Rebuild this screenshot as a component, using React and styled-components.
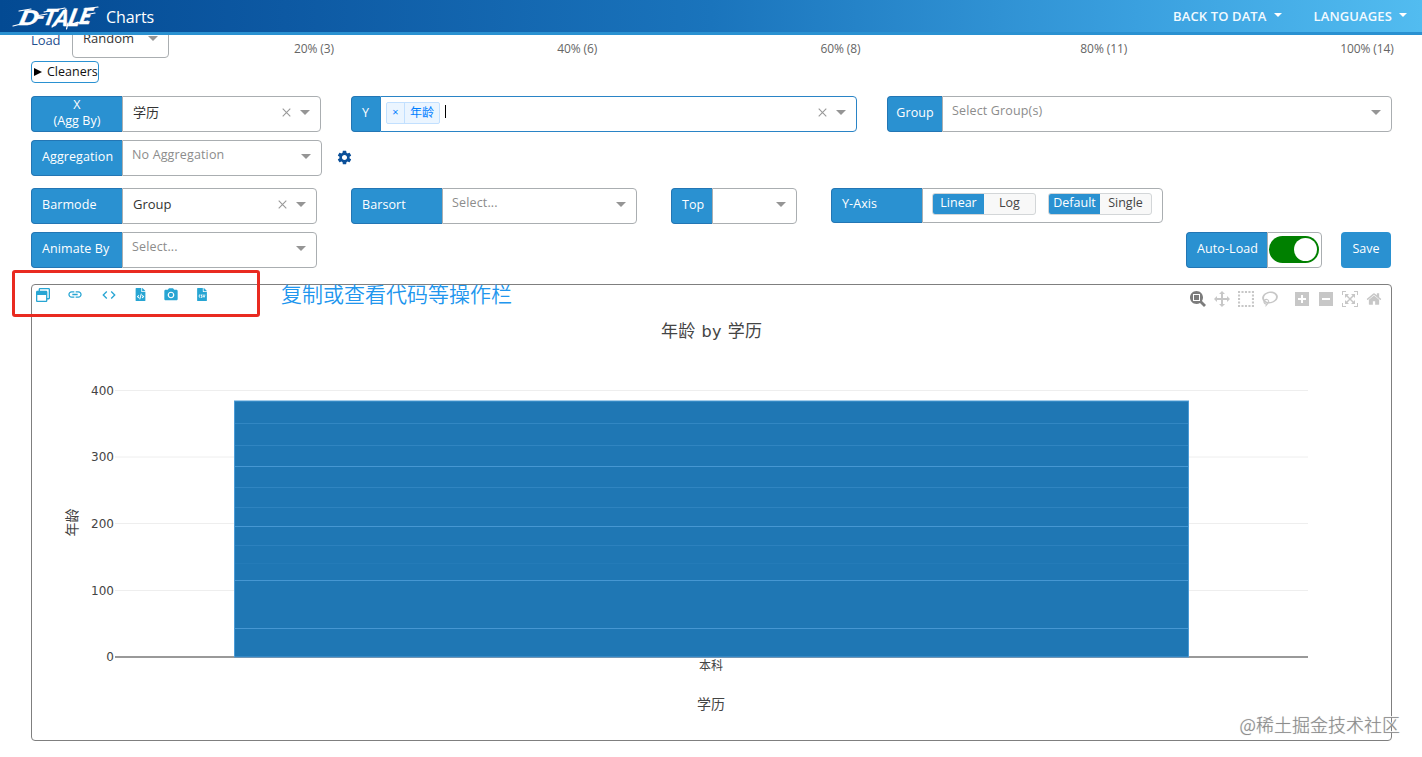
import React from "react"
import styled, { createGlobalStyle } from "styled-components"
import { FaRegWindowRestore, FaFileCode, FaFileCsv } from "react-icons/fa"
import { MdLink, MdCode, MdSettings, MdCameraAlt } from "react-icons/md"

const GlobalStyle = createGlobalStyle`
  * {
    box-sizing: border-box;
  }

  body {
    margin: 0;
    background: #fff;
    font-family: "Open Sans", "Noto Sans CJK SC", sans-serif;
    font-size: 13px;
    color: #333;
    overflow: hidden;
  }
`

const Page = styled.div`
  position: relative;
  width: 1422px;
  height: 757px;
  overflow: hidden;
  background: #fff;
`

const Header = styled.header`
  display: flex;
  align-items: center;
  height: 35px;
  padding: 0 15px 0 12px;
  background: linear-gradient(to right, #034a93 0%, #0d59a3 20%, #1a74bc 50%, #3aa0df 80%, #52bcf0 100%);
  border-bottom: 3px solid #2a91d1;
`

const Brand = styled.div`
  display: flex;
  align-items: center;
  gap: 7px;
  flex: 1;
  color: #fff;
`

const BrandTitle = styled.span`
  font-size: 16px;
  line-height: 20px;
  font-weight: 500;
  letter-spacing: -0.1px;
  padding-top: 1px;
`

const NavItem = styled.a`
  display: flex;
  align-items: center;
  gap: 7px;
  margin-left: 32px;
  color: #f2faff;
  font-size: 13px;
  font-weight: 600;
  letter-spacing: 0.12px;

  &::after {
    content: "";
    margin-bottom: 2px;
    border: 4px solid transparent;
    border-top-color: #fff;
    border-bottom: 0;
  }
`

const Content = styled.main`
  height: 722px;
  padding: 0 30px 0 31px;
  overflow: hidden;
`

const LoadRow = styled.div`
  display: flex;
  height: 36px;
  margin-top: -13px;
  margin-right: -5px;
`

const LoadLabel = styled.span`
  width: 41px;
  padding-top: 9px;
  line-height: 18px;
  color: #1f4f8f;
  letter-spacing: -0.1px;
`

const Marks = styled.div`
  flex: 1;
  display: flex;
  justify-content: space-between;
  margin-left: 115px;
  padding-top: 18px;
`

const Mark = styled.span`
  width: 60px;
  text-align: center;
  font-size: 12px;
  line-height: 18px;
  letter-spacing: -0.1px;
  color: #666;
`

const Cleaners = styled.button`
  display: flex;
  align-items: center;
  gap: 5px;
  width: 68px;
  height: 22px;
  margin: 3px 0 13px;
  padding: 0 0 2px 2px;
  border: 1px solid #2a91d1;
  border-radius: 4px;
  background: #fff;
  color: #111;
  font: 12.5px "Open Sans", sans-serif;
  letter-spacing: 0;
  white-space: nowrap;

  &::before {
    content: "";
    margin-top: 2px;
    border: 4px solid transparent;
    border-left: 8px solid #000;
    border-right: 0;
  }
`

const Row = styled.div`
  display: flex;
  align-items: flex-start;
  height: 36px;
  margin-bottom: ${(p) => p.$below || 8}px;
`

const Group = styled.div`
  display: flex;
  width: ${(p) => p.$width}px;
  height: ${(p) => p.$height || 36}px;
  margin-right: ${(p) => p.$after || 0}px;
`

const Label = styled.div`
  display: flex;
  flex-direction: column;
  justify-content: center;
  flex: none;
  width: ${(p) => p.$width}px;
  padding: 0 0 3px ${(p) => (p.$center ? 0 : 10)}px;
  text-align: ${(p) => (p.$center ? "center" : "left")};
  border: 1px solid #2376b4;
  border-right-width: 0;
  border-radius: 4px 0 0 4px;
  background: #2a91d1;
  color: #fff;
  font-size: 12.5px;
  font-weight: 500;
  line-height: 16px;
  letter-spacing: 0.1px;
  white-space: nowrap;
`

const Box = styled.div`
  display: flex;
  flex: ${(p) => (p.$width ? "none" : 1)};
  width: ${(p) => (p.$width ? p.$width + "px" : "auto")};
  height: 100%;
  border: 1px solid ${(p) => (p.$focused ? "#2a84c6" : "#aaaeb1")};
  border-radius: ${(p) => (p.$whole ? "4px" : "0 4px 4px 0")};
  background: #fff;
`

const Value = styled.span`
  flex: 1;
  padding: 6px 0 0 10px;
  line-height: 18px;
  font-family: "Open Sans", "Noto Sans CJK SC", sans-serif;
  font-size: 13px;
  color: #333;
`

const Placeholder = styled(Value)`
  padding: 5px 0 0 9px;
  font-size: 12.5px;
  letter-spacing: 0.15px;
  color: #8c8c8c;
`

const Clear = styled.svg`
  width: 9px;
  height: 9px;
  margin: 11px 9px 0 0;
  stroke: #999;
  stroke-width: 1.1;
`

const Arrow = styled.i`
  height: 0;
  margin: 13px 10px 0 0;
  border: 5px solid transparent;
  border-top-color: #959595;
  border-bottom: 0;
`

const Tag = styled.span`
  display: flex;
  align-self: flex-start;
  height: 22px;
  margin: 5px 0 0 5px;
  border: 1px solid #c2e0ff;
  border-radius: 2px;
  background: #ebf5ff;
  color: #007eff;
  font-size: 12px;
  line-height: 19px;
`

const TagRemove = styled.span`
  width: 18px;
  border-right: 1px solid #c2e0ff;
  text-align: center;
  font-size: 11px;
  line-height: 17px;
`

const TagText = styled.span`
  width: 34px;
  text-align: center;
`

const Caret = styled.i`
  flex: none;
  width: 1px;
  height: 13px;
  margin: 8px auto 0 5px;
  background: #000;
`

const Gear = styled(MdSettings)`
  width: 17px;
  height: 17px;
  margin: 9px 0 0 14px;
  color: #0a4f99;
`

const Toggle = styled.div`
  display: flex;
  height: 22px;
  margin: 4px 0 0 ${(p) => p.$left}px;
  border: 1px solid #d3d6d8;
  border-radius: 3px;
  background: #f8f8f8;
  overflow: hidden;
`

const ToggleItem = styled.span`
  width: 51px;
  text-align: center;
  font-size: 12.5px;
  font-weight: 500;
  line-height: 18px;
  background: ${(p) => (p.$on ? "#2a91d1" : "transparent")};
  color: ${(p) => (p.$on ? "#fff" : "#444")};
`

const Switch = styled.div`
  display: flex;
  justify-content: flex-end;
  width: 50px;
  height: 27px;
  margin: 3px 0 0 1px;
  padding: 2px;
  border-radius: 14px;
  background: #008000;

  &::after {
    content: "";
    width: 23px;
    height: 23px;
    border-radius: 50%;
    background: #fff;
  }
`

const Save = styled.button`
  width: 50px;
  height: 36px;
  margin-right: 1px;
  padding: 0 0 3px;
  border: 0;
  border-radius: 4px;
  background: #2a91d1;
  color: #fff;
  font: 500 12.5px "Open Sans", sans-serif;
`

const Spacer = styled.div`
  flex: 1;
`

const Panel = styled.section`
  width: 1361px;
  height: 457px;
  border: 1px solid #7f7f7f;
  border-radius: 4px;
`

const PanelBar = styled.div`
  display: flex;
  align-items: flex-start;
  height: 30px;
  padding: 0 9px 0 4px;
`

const Tools = styled.div`
  display: flex;
  flex: 1;
  color: #27a5d3;
`

const Tool = styled.span`
  display: flex;
  align-items: center;
  justify-content: center;
  width: ${(p) => p.$width}px;
  height: 19px;
  margin-right: ${(p) => p.$after || 0}px;
`

const ModeBar = styled.div`
  display: flex;
  padding-top: 6px;
`

const ModeButton = styled.svg`
  width: 16px;
  height: 16px;
  margin-left: ${(p) => p.$before || 8}px;
  fill: ${(p) => (p.$active ? "#7c7c7c" : "#c7c7c7")};
`

const Chart = styled.svg`
  display: block;
  width: 1359px;
  height: 425px;
  font-family: "DejaVu Sans", "Noto Sans CJK SC", sans-serif;
  fill: #444;
`

const Highlight = styled.div`
  position: absolute;
  left: 12px;
  top: 270px;
  width: 248px;
  height: 47px;
  border: 3px solid #e92a20;
  border-radius: 3px;
`

const Note = styled.div`
  position: absolute;
  left: 281px;
  top: 278px;
  color: #2196ee;
  font: 350 21px/30px "Noto Sans CJK SC", sans-serif;
  white-space: nowrap;
`

const Watermark = styled.div`
  position: absolute;
  right: 22px;
  top: 711px;
  color: #8c8c8c;
  font: 300 18px/26px "Noto Sans CJK SC", sans-serif;
  text-shadow: 0 0 1px #bbb, -1px -1px 0 #fff;
  white-space: nowrap;
`

const marks = ["20% (3)", "40% (6)", "60% (8)", "80% (11)", "100% (14)"]

const modeIcons = [
  { name: "zoom", active: true, d: "m1000-25l-250 251c40 63 63 138 63 218 0 224-182 406-407 406-224 0-406-182-406-406s183-406 407-406c80 0 155 22 218 62l250-250 125 125z m-812 250l0 438 437 0 0-438-437 0z m62 375l313 0 0-312-313 0 0 312z" },
  { name: "pan", d: "m1000 350l-187 188 0-125-250 0 0 250 125 0-188 187-187-187 125 0 0-250-250 0 0 125-188-188 186-187 0 125 252 0 0-250-125 0 187-188 188 188-125 0 0 250 250 0 0-126 187 188z" },
  { name: "select", dots: true },
  { name: "lasso", width: 1031, d: "m1018 538c-36 207-290 336-568 286-277-48-473-256-436-463 10-57 36-108 76-151-13-66 11-137 68-183 34-28 75-41 114-42l-55-70 0 0c-2-1-3-2-4-3-10-14-8-34 5-45 14-11 34-8 45 4 1 1 2 3 2 5l0 0 113 140c16 11 31 24 45 40 4 3 6 7 8 11 48-3 100 0 151 9 278 48 473 255 436 462z m-624-379c-80 14-149 48-197 96 42 42 109 47 156 9 33-26 47-66 41-105z m-187-74c-19 16-33 37-39 60 50-32 109-55 174-68-42-25-95-24-135 8z m360 75c-34-7-69-9-102-8 8 62-16 128-68 170-73 59-175 54-244-5-9 20-16 40-20 61-28 159 121 317 333 354s407-60 434-217c28-159-121-318-333-355z" },
  { name: "zoom in", before: 16, width: 875, d: "m1 787l0-875 875 0 0 875-875 0z m687-500l-187 0 0-187-125 0 0 187-188 0 0 125 188 0 0 187 125 0 0-187 187 0 0-125z" },
  { name: "zoom out", width: 875, d: "m0 788l0-876 875 0 0 876-875 0z m688-500l-500 0 0 125 500 0 0-125z" },
  { name: "autoscale", d: "m250 850l-187 0-63 0 0-62 0-188 63 0 0 188 187 0 0 62z m688 0l-188 0 0-62 188 0 0-188 62 0 0 188 0 62-62 0z m-875-938l0 188-63 0 0-188 0-62 63 0 187 0 0 62-187 0z m875 188l0-188-188 0 0-62 188 0 62 0 0 62 0 188-62 0z m-125 188l-1 0-93-94-156 156 156 156 92-93 2 0 0 250-250 0 0-2 93-92-156-156-156 156 94 92 0 2-250 0 0-250 0 0 93 93 157-156-157-156-93 94 0 0 0-250 250 0 0 0-94 93 156 157 156-157-93-93 0 0 250 0 0 250z" },
  { name: "reset", width: 928, d: "m786 296v-267q0-15-11-26t-25-10h-214v214h-143v-214h-214q-15 0-25 10t-11 26v267q0 1 0 2t0 2l321 264 321-264q1-1 1-4z m124 39l-34-41q-5-5-12-6h-2q-7 0-12 3l-386 322-386-322q-7-4-13-4-7 2-12 7l-35 41q-4 5-3 13t6 12l401 334q18 15 42 15t43-15l136-114v109q0 8 5 13t13 5h107q8 0 13-5t5-13v-227l122-102q5-5 6-12t-4-13z" },
]

const ticks = [
  { value: 400, y: 390.5 },
  { value: 300, y: 457 },
  { value: 200, y: 523.5 },
  { value: 100, y: 590.5 },
  { value: 0, y: 657 },
]

// borders between the stacked bars
const seams = [
  { y: 423.5, o: 0.45 },
  { y: 445.5, o: 0.4 },
  { y: 466.5, o: 0.9 },
  { y: 487.5, o: 0.4 },
  { y: 507.5, o: 0.35 },
  { y: 526.5, o: 0.9 },
  { y: 545.5, o: 0.3 },
  { y: 563.5, o: 0.12 },
  { y: 580.5, o: 0.9 },
  { y: 628.5, o: 0.9 },
]

// brush lettering: real text with dry-brush strokes over its edges
const Logo = () => (
  <svg width="87" height="28" viewBox="12 2 87 28" fill="#fff" stroke="#fff">
    <g fontFamily="Lato" fontWeight="900" fontStyle="italic" strokeWidth="0.4" transform="translate(0 25) skewX(-14)">
      <text y="0" fontSize="22">
        <tspan x="18" fontSize="20" textLength="19" lengthAdjust="spacingAndGlyphs">D</tspan>
        <tspan x="35" dy="-1">-</tspan>
        <tspan x="42" dy="1">T</tspan>
        <tspan x="53" dy="1">A</tspan>
        <tspan x="67" dy="0" fontSize="24">L</tspan>
        <tspan x="78" dy="-2">E</tspan>
      </text>
    </g>
    <g fill="none" strokeWidth="1.2" strokeLinecap="round">
      <path d="M13 26l12-3M19 11l12-2M36 16l11-2M44 12l21-4M68 23l-1.500 6M76 23l12-2M84 9l14-2M84 15l11-2M56 24l-4 3M66 9l-4 5M72 24l6-2" />
    </g>
  </svg>
)

const ClearIcon = () => (
  <Clear viewBox="0 0 9 9">
    <path d="M0.7 0.7l7.6 7.6M8.3 0.7l-7.6 7.6" />
  </Clear>
)

const Select = ({ value, placeholder }) => (
  <Box>
    {value ? <Value>{value}</Value> : <Placeholder>{placeholder}</Placeholder>}
    {value && <ClearIcon />}
    <Arrow />
  </Box>
)

const ModeIcon = ({ icon }) => (
  <ModeButton viewBox={`0 0 ${icon.width || 1000} 1000`} $active={icon.active} $before={icon.before}>
    {icon.dots ? (
      <path
        d="M0 65H1000M0 935H1000M65 0V1000M935 0V1000"
        fill="none"
        stroke="#c7c7c7"
        strokeWidth="130"
        strokeDasharray="130 87"
      />
    ) : (
      <path d={icon.d} transform="matrix(1 0 0 -1 0 850)" />
    )}
  </ModeButton>
)

const BarChart = () => (
  <Chart viewBox="32 315 1359 425">
    <text x="711.5" y="337" fontSize="17" textAnchor="middle" textLength="101">
      年龄 <tspan fontSize="16">by</tspan> 学历
    </text>
    {ticks.map((t) => (
      <g key={t.value}>
        <path d={`M115 ${t.y}H1308`} stroke={t.value ? "#eee" : "#999"} strokeWidth={t.value ? 1 : 2} />
        <text x="114" y={t.y + 4} fontSize="12" textAnchor="end">{t.value}</text>
      </g>
    ))}
    <rect x="234.5" y="401" width="954" height="256" fill="#1f77b4" stroke="#4b9bd6" strokeWidth="1" />
    {seams.map((s) => (
      <path key={s.y} d={`M235 ${s.y}H1188`} stroke="#4b9bd6" opacity={s.o} />
    ))}
    <path d="M234 657.5H1189" stroke="#7295b3" />
    <text x="711" y="670" fontSize="12" textAnchor="middle">本科</text>
    <text x="711" y="709" fontSize="14" textAnchor="middle">学历</text>
    <text transform="translate(77 522.5) rotate(-90)" fontSize="14" textAnchor="middle">年龄</text>
  </Chart>
)

const App = () => (
  <Page>
    <GlobalStyle />
    <Header>
      <Brand>
        <Logo />
        <BrandTitle>Charts</BrandTitle>
      </Brand>
      <NavItem>BACK TO DATA</NavItem>
      <NavItem>LANGUAGES</NavItem>
    </Header>
    <Content>
      <LoadRow>
        <LoadLabel>Load</LoadLabel>
        <Box $width={97} $whole>
          <Value>Random</Value>
          <Arrow />
        </Box>
        <Marks>
          {marks.map((m) => (
            <Mark key={m}>{m}</Mark>
          ))}
        </Marks>
      </LoadRow>
      <Cleaners>Cleaners</Cleaners>

      <Row>
        <Group $width={290} $after={30}>
          <Label $width={91} $center>
            <span>X</span>
            <span>(Agg By)</span>
          </Label>
          <Select value="学历" />
        </Group>
        <Group $width={506} $after={30}>
          <Label $width={29}>Y</Label>
          <Box $focused>
            <Tag>
              <TagRemove>×</TagRemove>
              <TagText>年龄</TagText>
            </Tag>
            <Caret />
            <ClearIcon />
            <Arrow />
          </Box>
        </Group>
        <Group $width={505}>
          <Label $width={55} $center>Group</Label>
          <Select placeholder="Select Group(s)" />
        </Group>
      </Row>

      <Row $below={12}>
        <Group $width={291}>
          <Label $width={91}>Aggregation</Label>
          <Select placeholder="No Aggregation" />
        </Group>
        <Gear />
      </Row>

      <Row>
        <Group $width={286} $after={34}>
          <Label $width={91}>Barmode</Label>
          <Select value="Group" />
        </Group>
        <Group $width={286} $after={34}>
          <Label $width={91}>Barsort</Label>
          <Select placeholder="Select..." />
        </Group>
        <Group $width={126} $after={34}>
          <Label $width={41}>Top</Label>
          <Select />
        </Group>
        <Group $width={332} $height={35}>
          <Label $width={91}>Y-Axis</Label>
          <Box>
            <Toggle $left={9}>
              <ToggleItem $on>Linear</ToggleItem>
              <ToggleItem>Log</ToggleItem>
            </Toggle>
            <Toggle $left={12}>
              <ToggleItem $on>Default</ToggleItem>
              <ToggleItem>Single</ToggleItem>
            </Toggle>
          </Box>
        </Group>
      </Row>

      <Row $below={16}>
        <Group $width={286}>
          <Label $width={91}>Animate By</Label>
          <Select placeholder="Select..." />
        </Group>
        <Spacer />
        <Group $width={136} $after={19}>
          <Label $width={81}>Auto-Load</Label>
          <Box>
            <Switch />
          </Box>
        </Group>
        <Save>Save</Save>
      </Row>

      <Panel>
        <PanelBar>
          <Tools>
            <Tool $width={14} $after={17}><FaRegWindowRestore size={14} /></Tool>
            <Tool $width={16} $after={18}><MdLink size={17} /></Tool>
            <Tool $width={16} $after={16}><MdCode size={16} /></Tool>
            <Tool $width={14} $after={16}><FaFileCode size={13} /></Tool>
            <Tool $width={16} $after={17}><MdCameraAlt size={16} /></Tool>
            <Tool $width={12}><FaFileCsv size={13} /></Tool>
          </Tools>
          <ModeBar>
            {modeIcons.map((icon) => (
              <ModeIcon key={icon.name} icon={icon} />
            ))}
          </ModeBar>
        </PanelBar>
        <BarChart />
      </Panel>
    </Content>
    <Highlight />
    <Note>复制或查看代码等操作栏</Note>
    <Watermark>@稀土掘金技术社区</Watermark>
  </Page>
)

export default App
